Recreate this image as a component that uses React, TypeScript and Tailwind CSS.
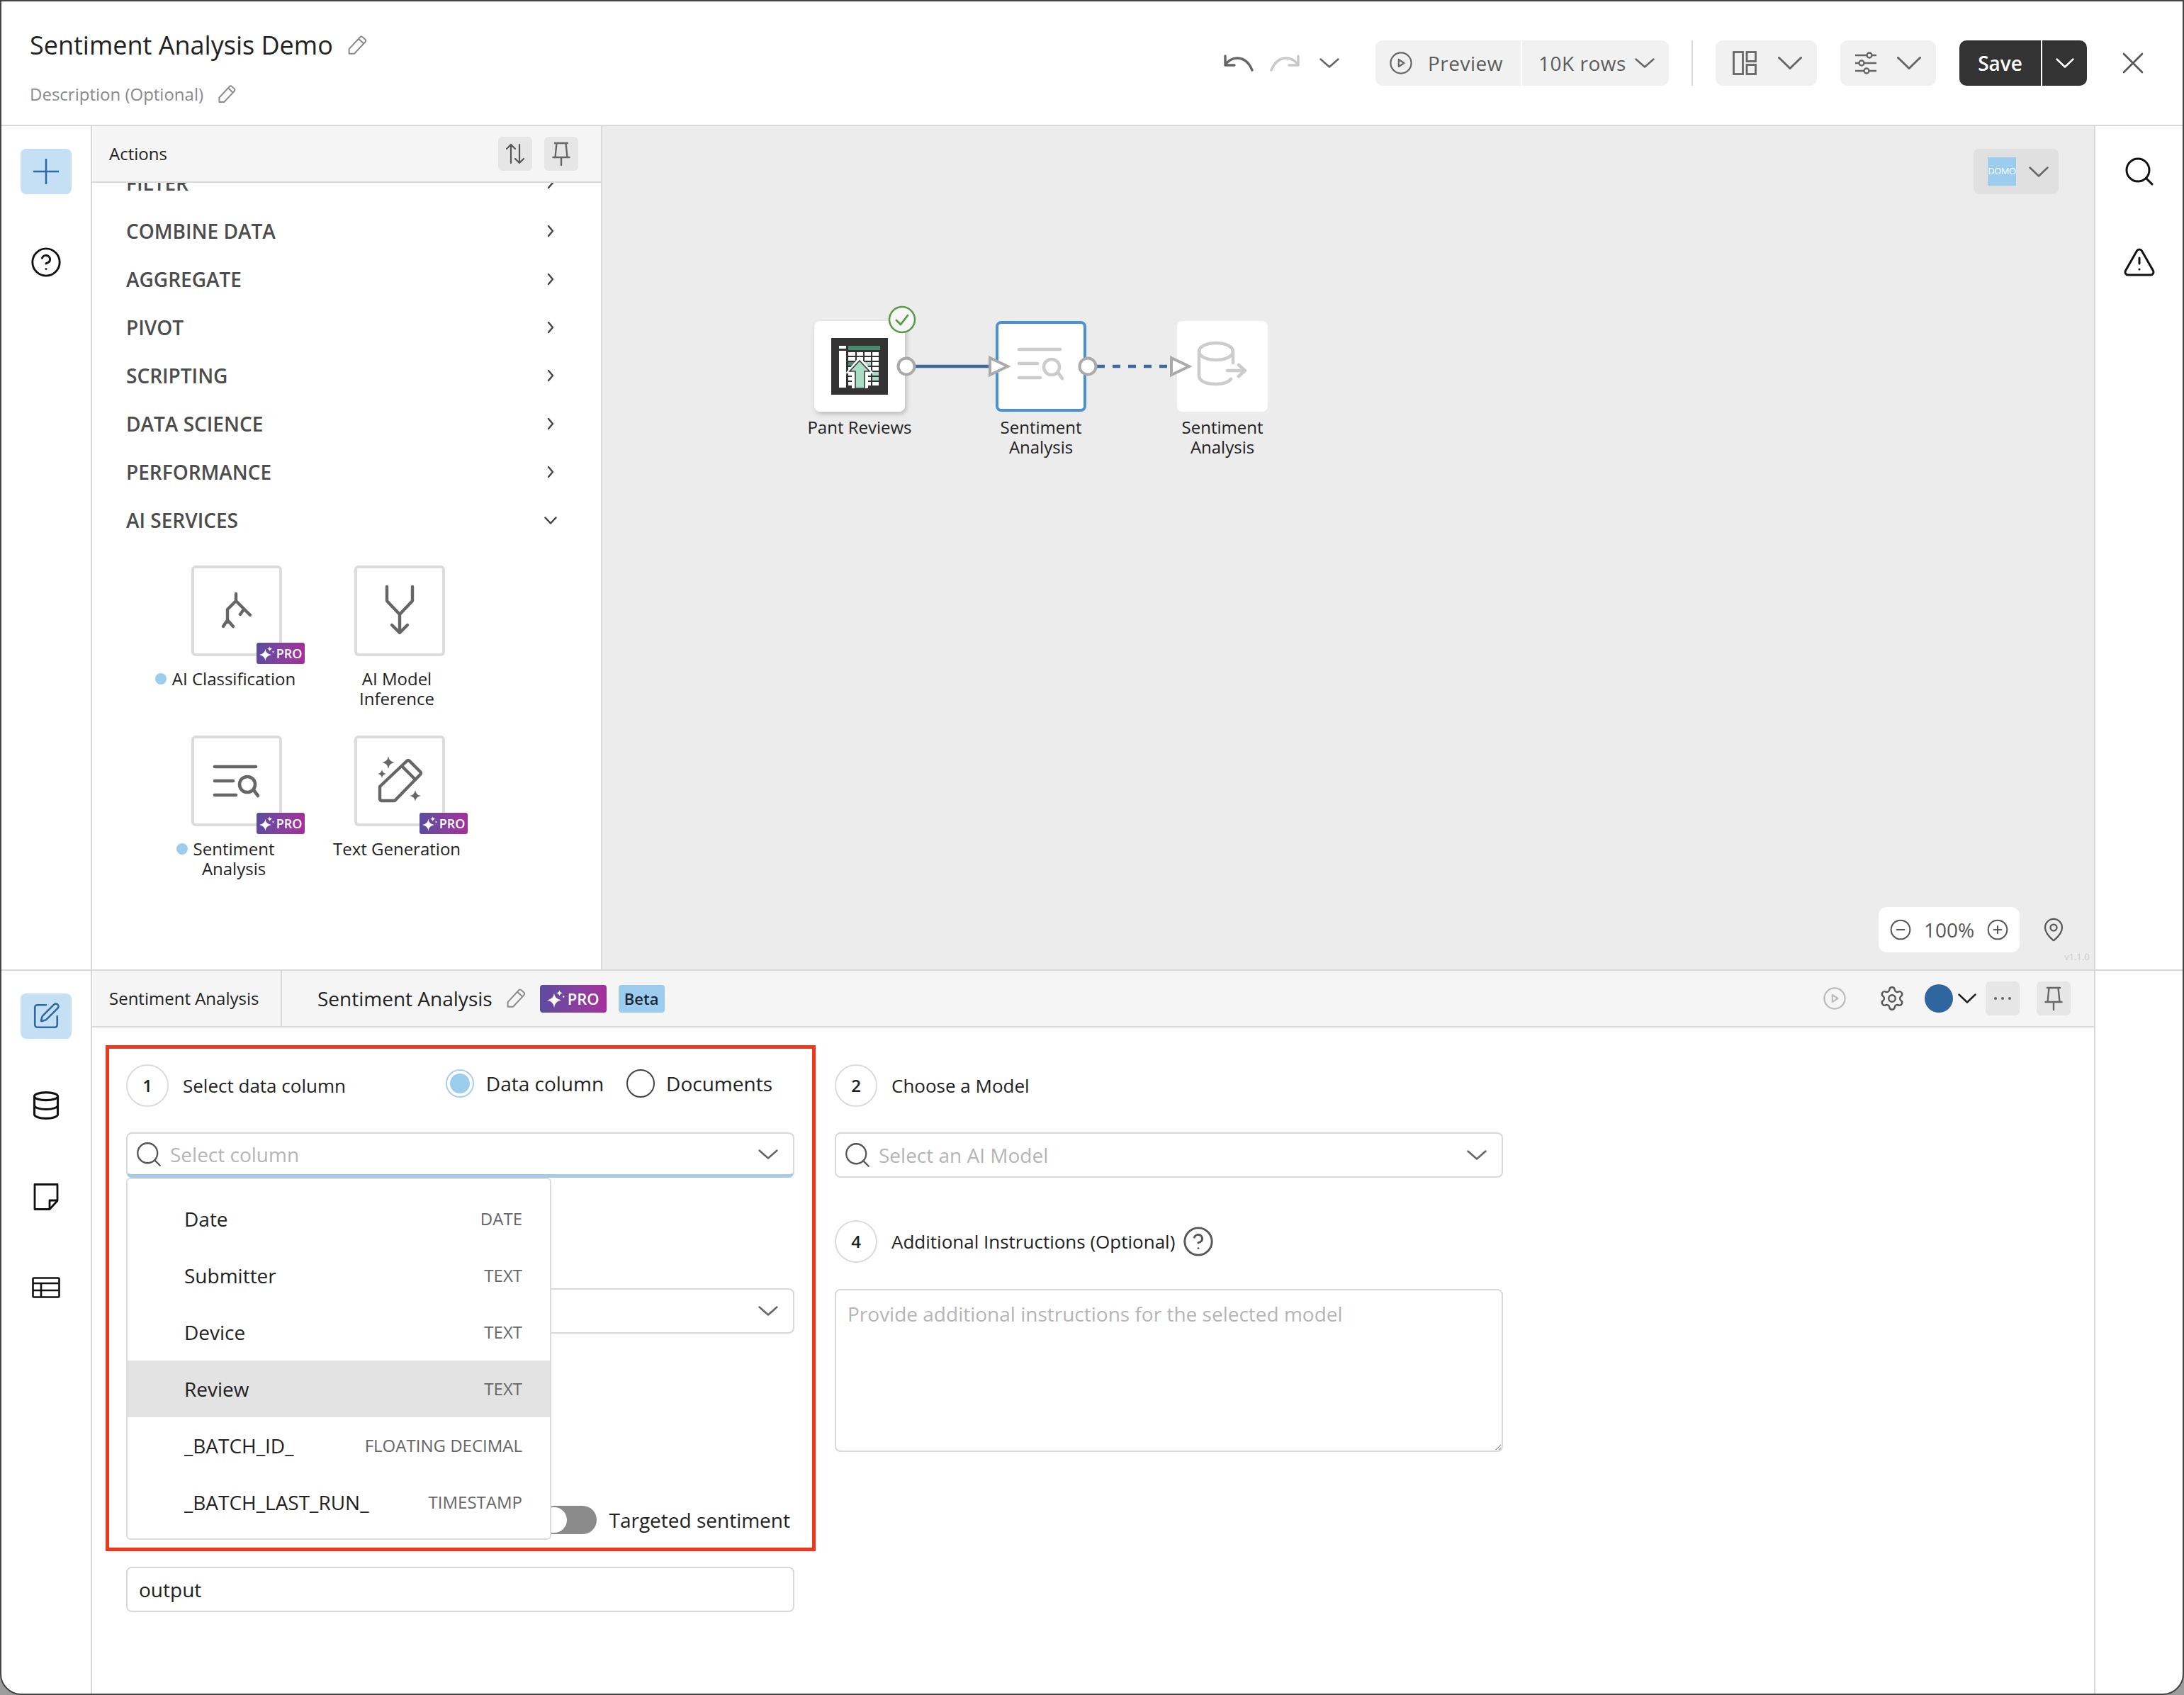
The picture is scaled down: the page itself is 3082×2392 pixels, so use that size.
import { CircleHelp, CircleMinus, CirclePlus, Database, MapPin, Search, Settings, SquarePen, TriangleAlert } from "lucide-react";

const Chevron = ({ w = 28, h = 14, color = "#666", sw = 2.5, className = "" }: { w?: number; h?: number; color?: string; sw?: number; className?: string }) => (
  <svg width={w} height={h} viewBox={`0 0 ${w} ${h}`} fill="none" stroke={color} strokeWidth={sw} strokeLinecap="round" strokeLinejoin="round" className={`shrink-0 ${className}`}>
    <polyline points={`1.5,1.5 ${w / 2},${h - 1.5} ${w - 1.5},1.5`} />
  </svg>
);

const RightChevron = () => (
  <svg width="12" height="18" viewBox="0 0 12 18" fill="none" stroke="#444" strokeWidth="2.4" strokeLinecap="round" strokeLinejoin="round">
    <polyline points="3,2 9,9 3,16" />
  </svg>
);

const Pencil = ({ size = 30 }: { size?: number }) => (
  <svg width={size} height={size} viewBox="0 0 24 24" fill="none" stroke="#8a8a8a" strokeWidth="1.5" strokeLinejoin="round" className="shrink-0">
    <path d="M3.5 20.8V15.8L15 3.4a2 2 0 0 1 2.8-.1l2.6 2.4a2 2 0 0 1 .1 2.8L9 20.8z" />
    <path d="M13.5 5l5.6 5.2" />
  </svg>
);

const Pin = () => (
  <svg width="32" height="36" viewBox="0 0 32 36" fill="none" stroke="#666" strokeWidth="2.4" strokeLinecap="round" strokeLinejoin="round">
    <path d="M7 3h18M9.5 3 7.5 23M22.5 3l2 20M4.5 23h23M16 23v11" />
  </svg>
);

const Play = ({ size = 32, color = "#666" }: { size?: number; color?: string }) => (
  <svg width={size} height={size} viewBox="0 0 32 32" fill="none" stroke={color} strokeWidth="2.2" strokeLinejoin="round" className="shrink-0">
    <circle cx="16" cy="16" r="14.6" />
    <path d="M12.8 11v10l7.6-5z" />
  </svg>
);

const Sparkle = ({ size = 20 }: { size?: number }) => (
  <svg width={size} height={size} viewBox="0 0 20 20" fill="#fff" className="shrink-0">
    <path d="M8 3.500Q8.500 10 16 11.500 8.500 13 8 20 7.500 13 0 11.500 7.500 10 8 3.500z" />
    <path d="M14 0Q14.200 3 17.500 3.500 14.200 4 14 7 13.800 4 10.500 3.500 13.800 3 14 0z" />
    <circle cx="18.500" cy="7.500" r="1" />
  </svg>
);

const ProTag = () => (
  <div className="absolute top-[105px] left-[88px] flex h-[30px] w-[68px] items-center justify-center gap-[3px] rounded-[3px] bg-gradient-to-r from-[#5a4b9f] to-[#a52e9b] text-[18px] font-semibold text-white">
    <Sparkle size={21} />
    PRO
  </div>
);

const ClassifyIcon = () => (
  <svg width="120" height="120" viewBox="4 4 120 120" fill="none" stroke="#666" strokeWidth="4.4" strokeLinecap="round" strokeLinejoin="round">
    <path d="M63 40v10L51 62v18M51 77l-6 9M51 77l8 9M63 50l20 20M74 62l-5 7" />
  </svg>
);

const InferenceIcon = () => (
  <svg width="120" height="120" viewBox="4 4 120 120" fill="none" stroke="#666" strokeWidth="4.4" strokeLinecap="round" strokeLinejoin="round">
    <path d="M46 30v20l18 19 18-19V30M64 69v25M53 84l11 11 11-11" />
  </svg>
);

const SentimentIcon = ({ color = "#666", sw = 4.6, dy = 4 }: { color?: string; sw?: number; dy?: number }) => (
  <svg width="120" height="120" viewBox={`4 ${dy} 120 120`} fill="none" stroke={color} strokeWidth={sw} strokeLinecap="round">
    <path d="M33 44h58M33 64h26M33 84h30M88 77l6 8" />
    <circle cx="79" cy="69" r="11" />
  </svg>
);

const TextGenIcon = () => (
  <svg width="120" height="120" viewBox="4 4 120 120" fill="none" stroke="#666" strokeWidth="4.4" strokeLinecap="round" strokeLinejoin="round">
    <path d="M36 72 74 36a3 3 0 0 1 4 0l15 15a3 3 0 0 1 0 4L57 92H39a3 3 0 0 1-3-3zM67 43l19 19" />
    <g fill="#666" stroke="none">
      <path d="M48 29Q49 37 57 38 49 39 48 47 47 39 39 38 47 37 48 29z" />
      <path d="M39 48Q39.600 53 45 54 39.600 55 39 60 38.400 55 33 54 38.400 53 39 48z" />
      <path d="M86 77Q87 84 94 85 87 86 86 93 85 86 78 85 85 84 86 77z" />
    </g>
  </svg>
);

const SheetIcon = () => {
  const xs = [24, 36, 47, 58];
  const ys = [20, 27, 34, 41, 48, 55, 62];
  const green = ["2-2", "3-4", "3-5"];
  return (
    <svg width="80" height="80" viewBox="0 0 80 80">
      <rect width="80" height="80" fill="#333" />
      <rect x="11" y="11" width="10" height="4" fill="#fff" />
      <rect x="11" y="18" width="10" height="52" fill="#fff" />
      <rect x="24" y="11" width="45" height="6" fill="#4a8a6e" />
      {xs.map((x, i) =>
        ys.map((y, j) => (
          <rect key={`${i}-${j}`} x={x} y={y} width={i === 0 ? 10 : 9} height="5" fill={green.includes(`${i}-${j}`) ? "#a8dcc4" : j === 2 && i === 0 ? "#4a8a6e" : "#fff"} />
        ))
      )}
      <polygon points="40,26 60,50 52,50 52,71 29,71 29,50 20,50" fill="#fff" />
      <polygon points="40,32 54,47 47,47 47,71 34,71 34,47 26,47" fill="#a8dcc4" stroke="#3a3a3a" strokeWidth="1.6" />
    </svg>
  );
};

const DatasetIcon = () => (
  <svg width="120" height="120" viewBox="4 4 120 120" fill="none" stroke="#ccc" strokeWidth="4.6" strokeLinecap="round" strokeLinejoin="round">
    <ellipse cx="55" cy="43" rx="24" ry="12" />
    <path d="M31 43v34c0 8 10 12 24 12 9 0 17-2 21-7" />
    <path d="M79 43v16M71 70h25M87 62l9 8-9 8" />
  </svg>
);

const Node = ({ x, children, label, className }: { x: string; children: React.ReactNode; label: React.ReactNode; className: string }) => (
  <div className={`absolute top-[275px] w-[128px] ${x}`}>
    <div className={`flex h-[128px] w-[128px] items-center justify-center rounded-[8px] bg-white ${className}`}>{children}</div>
    <div className="absolute top-[136px] left-1/2 w-[220px] -translate-x-1/2 text-center text-[24px] leading-[28px] text-[#222]">{label}</div>
  </div>
);

const Tile = ({ children, pro }: { children: React.ReactNode; pro?: boolean }) => (
  <div className="relative ml-[8px] flex h-[128px] w-[128px] items-center justify-center rounded-[6px] border-4 border-[#dcdcdc] bg-white">
    {children}
    {pro && <ProTag />}
  </div>
);

const Dot = () => <span className="absolute top-[6px] -left-[24px] h-[16px] w-[16px] rounded-full bg-[#9ccdef]" />;

const Step = ({ n }: { n: number }) => (
  <div className="flex h-[60px] w-[60px] shrink-0 items-center justify-center rounded-full border-2 border-[#dcdcdc] text-[24px] font-semibold text-[#222]">{n}</div>
);

const SelectBox = ({ placeholder, active }: { placeholder: string; active?: boolean }) => (
  <div className={`flex h-[64px] items-center rounded-[8px] border-2 border-[#d9d9d9] bg-white pr-[21px] pl-[9px] ${active ? "border-b-[5px] border-b-[#a3cbe6]" : ""}`}>
    <Search size={42} strokeWidth={1.3} color="#555" className="shrink-0" />
    <span className="ml-[9px] flex-1 text-[28px] text-[#b5b5b5]">{placeholder}</span>
    <Chevron />
  </div>
);

const columns = [
  { name: "Date", type: "DATE" },
  { name: "Submitter", type: "TEXT" },
  { name: "Device", type: "TEXT" },
  { name: "Review", type: "TEXT", hover: true },
  { name: "_BATCH_ID_", type: "FLOATING DECIMAL" },
  { name: "_BATCH_LAST_RUN_", type: "TIMESTAMP" },
];

const menu = ["FILTER", "COMBINE DATA", "AGGREGATE", "PIVOT", "SCRIPTING", "DATA SCIENCE", "PERFORMANCE"];

export default function App() {
  return (
    <div className="h-[2392px] w-[3082px] overflow-hidden bg-[#9c9c9c] font-['Open_Sans',sans-serif]">
      <div className="flex h-full w-full flex-col overflow-hidden rounded-b-[30px] border-2 border-[#444] bg-white">
        {/* top bar */}
        <header className="flex h-[176px] shrink-0 justify-between border-b-2 border-[#d9d9d9] pr-[55px] pl-[40px]">
          <div className="pt-[38px]">
            <div className="flex h-[48px] items-center gap-[18px] text-[36px] text-[#222]">
              Sentiment Analysis Demo
              <Pencil size={32} />
            </div>
            <div className="mt-[29px] flex h-[32px] items-center gap-[18px] text-[24px] text-[#8a8a8a]">
              Description (Optional)
              <Pencil size={30} />
            </div>
          </div>
          <div className="mt-[55px] flex h-[64px] items-center">
            <svg width="42" height="24" viewBox="0 0 42 24" fill="none" stroke="#666" strokeWidth="3.400" strokeLinecap="round" strokeLinejoin="round">
              <path d="M2 2v13h13M2 15C8 3 30-2 40 22" />
            </svg>
            <svg width="42" height="24" viewBox="0 0 42 24" fill="none" stroke="#c8c8c8" strokeWidth="3.400" strokeLinecap="round" strokeLinejoin="round" className="ml-[23px]">
              <path d="M40 2v13H27M40 15C34 3 12-2 2 22" />
            </svg>
            <Chevron className="ml-[28px]" />
            <div className="ml-[51px] flex h-[64px] w-[414px] items-center rounded-[10px] bg-[#f1f1f1] text-[28px] font-medium text-[#5c5c5c]">
              <div className="flex h-full w-[205px] items-center gap-[22px] pl-[20px]">
                <Play />
                <span className="tracking-[0.5px]">Preview</span>
              </div>
              <div className="h-full w-[2px] bg-white" />
              <div className="flex h-full flex-1 items-center pl-[23px]">
                <span className="tracking-[0.5px]">10K rows</span>
                <Chevron className="ml-[12px]" />
              </div>
            </div>
            <div className="mx-[32px] h-[64px] w-[2px] bg-[#d9d9d9]" />
            <div className="flex h-[64px] w-[143px] items-center rounded-[10px] bg-[#f1f1f1] pl-[24px]">
              <svg width="34" height="34" viewBox="0 0 34 34" fill="none" stroke="#666" strokeWidth="2.800">
                <rect x="1.500" y="1.500" width="13" height="31" />
                <rect x="20" y="1.500" width="12.500" height="13" />
                <rect x="20" y="19.500" width="12.500" height="13" />
              </svg>
              <Chevron w={34} h={18} sw={3} className="ml-[30px]" />
            </div>
            <div className="ml-[33px] flex h-[64px] w-[135px] items-center rounded-[10px] bg-[#f1f1f1] pl-[21px]">
              <svg width="30" height="32" viewBox="0 0 30 32" fill="none" stroke="#666" strokeWidth="2.400" strokeLinecap="round">
                <path d="M0 5h16M24 5h6M0 16h5M13 16h17M0 27h12M20 27h10" />
                <circle cx="20" cy="5" r="3.500" />
                <circle cx="9" cy="16" r="3.500" />
                <circle cx="16" cy="27" r="3.500" />
              </svg>
              <Chevron w={34} h={18} sw={3} className="ml-[29px]" />
            </div>
            <div className="ml-[33px] flex h-[64px] w-[180px] items-center rounded-[10px] bg-[#333] text-[28px] font-semibold text-white">
              <div className="flex h-full w-[115px] items-center justify-center">Save</div>
              <div className="h-full w-[2px] bg-white" />
              <div className="flex flex-1 items-center justify-center">
                <Chevron w={26} h={14} color="#fff" />
              </div>
            </div>
            <svg width="30" height="30" viewBox="0 0 30 30" stroke="#555" strokeWidth="2.600" strokeLinecap="round" className="ml-[50px]">
              <path d="M2 2l26 26M28 2 2 28" />
            </svg>
          </div>
        </header>

        {/* workspace */}
        <div className="flex h-[1192px] shrink-0 border-b-2 border-[#d9d9d9]">
          <div className="flex w-[128px] shrink-0 flex-col items-center border-r-2 border-[#d9d9d9] pt-[32px]">
            <div className="flex h-[64px] w-[72px] items-center justify-center rounded-[8px] bg-[#c5e0f5]">
              <svg width="36" height="36" viewBox="0 0 36 36" stroke="#2f6ba3" strokeWidth="2.600">
                <path d="M0 18h36M18 0v36" />
              </svg>
            </div>
            <CircleHelp size={46} strokeWidth={1.5} color="#111" className="mt-[73px]" />
          </div>

          <div className="flex w-[720px] shrink-0 flex-col overflow-hidden border-r-2 border-[#d9d9d9]">
            <div className="z-10 flex h-[80px] shrink-0 items-center justify-between border-b-2 border-[#d9d9d9] bg-[#f5f5f5] pr-[32px] pl-[24px] text-[24px] text-[#222]">
              Actions
              <div className="flex items-center gap-[17px]">
                <div className="flex h-[48px] w-[48px] items-center justify-center rounded-[6px] bg-[#e6e6e6]">
                  <svg width="28" height="30" viewBox="0 0 28 30" fill="none" stroke="#555" strokeWidth="2.200" strokeLinecap="round" strokeLinejoin="round">
                    <path d="M8 28V2M2 8l6-6 6 6M20 2v26M14 22l6 6 6-6" />
                  </svg>
                </div>
                <div className="flex h-[48px] w-[48px] items-center justify-center rounded-[6px] bg-[#e6e6e6]">
                  <Pin />
                </div>
              </div>
            </div>
            <div className="-mt-[34px] flex-1">
              {menu.map((item) => (
                <div key={item} className="flex h-[68px] items-center justify-between pr-[65px] pl-[48px] text-[28px] font-semibold text-[#4c4c4c]">
                  {item}
                  <RightChevron />
                </div>
              ))}
              <div className="flex h-[68px] items-center justify-between pr-[62px] pl-[48px] text-[28px] font-semibold text-[#4c4c4c]">
                AI SERVICES
                <Chevron w={18} h={11} color="#444" />
              </div>
              <div className="mt-[30px] ml-[85px] grid w-[460px] auto-rows-[240px] grid-cols-2 text-[24px] leading-[28px] text-[#222]">
                <div className="flex flex-col items-center">
                  <Tile pro><ClassifyIcon /></Tile>
                  <div className="relative mt-[18px] text-center">
                    <Dot />
                    AI Classification
                  </div>
                </div>
                <div className="flex flex-col items-center">
                  <Tile><InferenceIcon /></Tile>
                  <div className="mt-[18px] text-center">
                    AI Model
                    <br />
                    Inference
                  </div>
                </div>
                <div className="flex flex-col items-center">
                  <Tile pro><SentimentIcon /></Tile>
                  <div className="relative mt-[18px] text-center">
                    <Dot />
                    Sentiment
                    <br />
                    Analysis
                  </div>
                </div>
                <div className="flex flex-col items-center">
                  <Tile pro><TextGenIcon /></Tile>
                  <div className="mt-[18px] text-center">Text Generation</div>
                </div>
              </div>
            </div>
          </div>

          <div className="relative min-w-0 flex-1 bg-[#ececec]">
            <div className="absolute top-[32px] right-[50px] flex h-[64px] w-[120px] items-center rounded-[8px] bg-[#e0e0e0] pl-[20px]">
              <div className="flex h-[40px] w-[40px] items-center justify-center overflow-hidden bg-[#9ccdef] text-[13px] tracking-[-0.5px] text-white">DOMO</div>
              <Chevron color="#666" w={28} h={15} className="ml-[18px]" />
            </div>

            <svg width="1000" height="500" className="absolute top-0 left-0" fill="none">
              <line x1="442" y1="339" x2="547" y2="339" stroke="#3f6a9f" strokeWidth="4.500" />
              <line x1="698" y1="339" x2="803" y2="339" stroke="#3f6a9f" strokeWidth="4.500" strokeDasharray="11 11" />
            </svg>

            <Node x="left-[299px]" className="shadow-[2px_3px_6px_rgba(0,0,0,0.22)]" label="Pant Reviews">
              <SheetIcon />
            </Node>
            <Node x="left-[555px]" className="border-4 border-[#4a90d9]" label={<>Sentiment<br />Analysis</>}>
              <SentimentIcon color="#ccc" sw={4.6} dy={8} />
            </Node>
            <Node x="left-[811px]" className="" label={<>Sentiment<br />Analysis</>}>
              <DatasetIcon />
            </Node>

            {/* ports sit over the nodes */}
            <svg width="1000" height="500" className="absolute top-0 left-0" fill="none" stroke="#aaa" strokeWidth="4">
              <circle cx="429" cy="339" r="11.500" fill="#fff" />
              <polygon points="547,327 572,339 547,351" fill="#fff" />
              <circle cx="685" cy="339" r="11.500" fill="#fff" />
              <polygon points="803,327 828,339 803,351" fill="#fff" />
              <circle cx="423" cy="273" r="18" fill="#f6f6f6" stroke="#5a9a44" strokeWidth="2.500" />
              <path d="M415 274l6 6 10-13" stroke="#5a9a44" strokeWidth="2.800" strokeLinecap="round" strokeLinejoin="round" />
            </svg>

            <div className="absolute top-[1102px] left-[1801px] flex h-[64px] w-[199px] items-center justify-between rounded-[12px] bg-white px-[15px] text-[28px] text-[#555]">
              <CircleMinus size={32} strokeWidth={1.5} color="#555" />
              100%
              <CirclePlus size={32} strokeWidth={1.5} color="#555" />
            </div>
            <MapPin size={36} strokeWidth={1.5} color="#555" className="absolute top-[1116px] left-[2030px]" />
            <div className="absolute top-[1163px] left-[2063px] text-[13px] leading-[18px] text-[#ccc]">v1.1.0</div>
          </div>

          <div className="flex w-[125px] shrink-0 flex-col items-center border-l-2 border-[#d9d9d9] pt-[40px]">
            <Search size={48} strokeWidth={1.5} color="#111" />
            <TriangleAlert size={48} strokeWidth={1.5} color="#111" className="mt-[80px]" />
          </div>
        </div>

        {/* editor */}
        <div className="flex min-h-0 flex-1">
          <div className="flex w-[128px] shrink-0 flex-col items-center border-r-2 border-[#d9d9d9] pt-[32px]">
            <div className="flex h-[64px] w-[72px] items-center justify-center rounded-[8px] bg-[#c5e0f5]">
              <SquarePen size={42} strokeWidth={1.5} color="#2f6ba3" />
            </div>
            <Database size={44} strokeWidth={1.7} color="#111" className="mt-[72px]" />
            <svg width="38" height="38" viewBox="0 0 38 38" fill="none" stroke="#111" strokeWidth="2.800" strokeLinejoin="round" className="mt-[88px]">
              <path d="M3 1.500h32v23L24 36.500H3z" />
              <path d="M35 24H24v12.500" />
            </svg>
            <svg width="40" height="30" viewBox="0 0 40 30" fill="none" stroke="#111" strokeWidth="2.600" className="mt-[94px]">
              <rect x="1.500" y="1.500" width="37" height="27" rx="1.500" />
              <path d="M1.500 9h37M1.500 19h37M13 9v20" />
            </svg>
          </div>

          <div className="relative flex w-[825px] min-w-0 flex-1 flex-col border-r-2 border-[#d9d9d9]">
            <div className="flex h-[80px] shrink-0 items-center border-b-2 border-[#d9d9d9] bg-[#f5f5f5] pr-[33px]">
              <div className="flex h-full w-[268px] items-center border-r-2 border-[#d9d9d9] pl-[24px] text-[24px] text-[#222]">Sentiment Analysis</div>
              <div className="ml-[50px] text-[28px] text-[#222]">Sentiment Analysis</div>
              <div className="ml-[17px]"><Pencil size={32} /></div>
              <div className="ml-[18px] flex h-[39px] w-[94px] items-center justify-center gap-[4px] rounded-[4px] bg-gradient-to-r from-[#5a4b9f] to-[#a52e9b] text-[22px] font-semibold text-white">
                <Sparkle size={25} />
                PRO
              </div>
              <div className="ml-[17px] flex h-[39px] w-[65px] items-center justify-center rounded-[4px] bg-[#9ccdef] text-[22px] font-semibold text-[#1c2733]">Beta</div>
              <div className="ml-auto"><Play size={32} color="#bbb" /></div>
              <Settings size={38} strokeWidth={1.5} color="#555" className="ml-[46px]" />
              <div className="ml-[27px] h-[40px] w-[40px] rounded-full bg-[#2f66a0]" />
              <Chevron w={26} h={14} color="#222" className="ml-[7px]" />
              <div className="ml-[13px] flex h-[48px] w-[48px] items-center justify-center gap-[6px] rounded-[6px] bg-[#e6e6e6]">
                <span className="h-[4px] w-[4px] rounded-full bg-[#666]" />
                <span className="h-[4px] w-[4px] rounded-full bg-[#666]" />
                <span className="h-[4px] w-[4px] rounded-full bg-[#666]" />
              </div>
              <div className="ml-[24px] flex h-[48px] w-[48px] items-center justify-center rounded-[6px] bg-[#e6e6e6]">
                <Pin />
              </div>
            </div>

            <div className="relative grid grid-cols-[943px_943px] gap-x-[57px] pt-[52px] pl-[48px]">
              <div>
                <div className="flex h-[60px] items-center">
                  <Step n={1} />
                  <span className="ml-[20px] text-[26px] text-[#222]">Select data column</span>
                  <div className="ml-auto flex -translate-y-[3px] items-center pr-[31px] text-[28px] text-[#222]">
                    <span className="flex h-[40px] w-[40px] items-center justify-center rounded-full border-2 border-[#a9cfe9]">
                      <span className="h-[28px] w-[28px] rounded-full bg-[#9ccdef]" />
                    </span>
                    <span className="ml-[17px]">Data column</span>
                    <span className="ml-[32px] h-[40px] w-[40px] rounded-full border-2 border-[#444]" />
                    <span className="ml-[16px]">Documents</span>
                  </div>
                </div>
                <div className="relative mt-[36px] h-[64px]">
                  <SelectBox placeholder="Select column" active />
                  <div className="absolute top-[64px] left-0 z-10 h-[511px] w-[600px] rounded-[6px] border-2 border-[#dcdcdc] bg-white py-[16px]">
                    {columns.map((c) => (
                      <div key={c.name} className={`flex h-[80px] items-center justify-between pr-[39px] pl-[80px] ${c.hover ? "bg-[#e3e3e3]" : ""}`}>
                        <span className="text-[28px] text-[#222]">{c.name}</span>
                        <span className="text-[24px] text-[#666]">{c.type}</span>
                      </div>
                    ))}
                  </div>
                </div>
                <div className="mt-[156px] flex h-[64px] items-center justify-end rounded-[8px] border-2 border-[#d9d9d9] pr-[21px]">
                  <Chevron />
                </div>
                <div className="mt-[242px] flex h-[41px] items-center justify-end gap-[17px] pr-[6px] text-[28px] text-[#222]">
                  <div className="flex h-[40px] w-[80px] items-center rounded-full bg-[#8a8a8a] pl-[2px]">
                    <span className="h-[36px] w-[36px] rounded-full bg-white" />
                  </div>
                  Targeted sentiment
                </div>
                <div className="mt-[46px] flex h-[64px] items-center rounded-[8px] border-2 border-[#d9d9d9] pl-[16px] text-[28px] text-[#222]">output</div>
              </div>

              <div>
                <div className="flex h-[60px] items-center">
                  <Step n={2} />
                  <span className="ml-[20px] text-[26px] text-[#222]">Choose a Model</span>
                </div>
                <div className="mt-[36px]">
                  <SelectBox placeholder="Select an AI Model" />
                </div>
                <div className="mt-[60px] flex h-[60px] items-center">
                  <Step n={4} />
                  <span className="ml-[20px] text-[26px] text-[#222]">Additional Instructions (Optional)</span>
                  <CircleHelp size={46} strokeWidth={1.5} color="#555" className="ml-[10px]" />
                </div>
                <textarea placeholder="Provide additional instructions for the selected model" className="mt-[37px] block h-[230px] w-full rounded-[8px] border-2 border-[#d9d9d9] px-[16px] py-[14px] text-[28px] leading-[38px] placeholder:text-[#b5b5b5]" />
              </div>

              {/* annotation frame drawn on the screenshot */}
              <div className="pointer-events-none absolute top-[25px] left-[19px] z-20 h-[714px] w-[1002px] border-[5px] border-[#f0361c]" />
            </div>
          </div>

          <div className="w-[123px] shrink-0" />
        </div>
      </div>
    </div>
  );
}
